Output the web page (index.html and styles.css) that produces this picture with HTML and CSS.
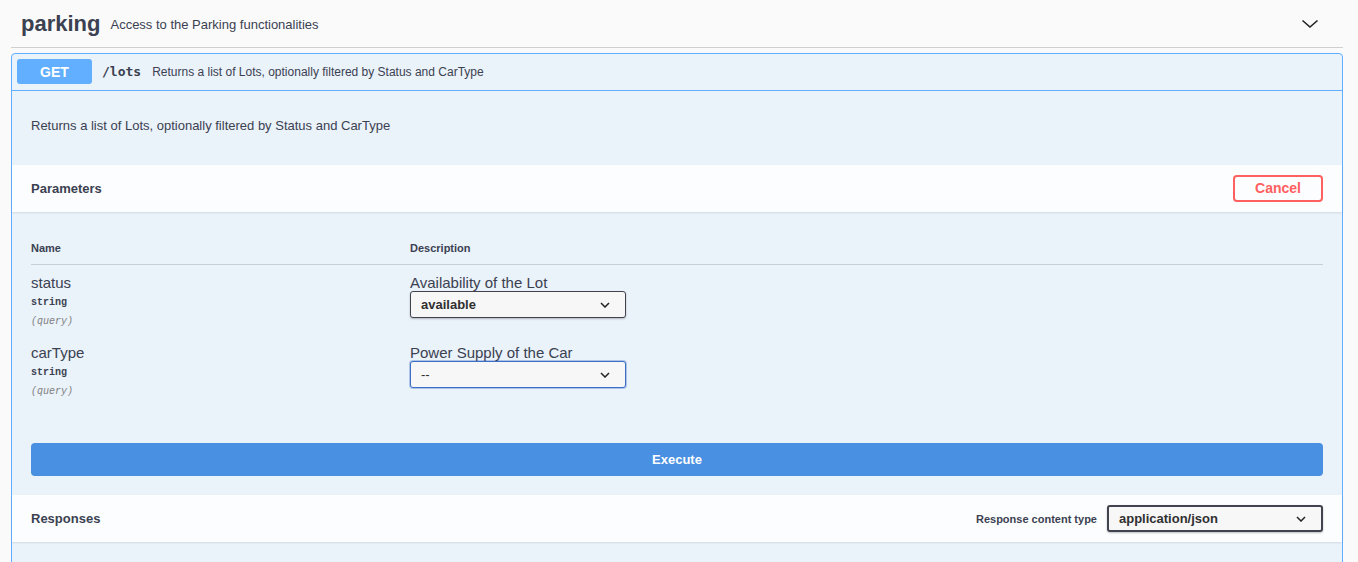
FILE: index.html
```html
<!DOCTYPE html>
<html lang="en">
<head>
<meta charset="utf-8">
<title>parking</title>
<link rel="stylesheet" href="styles.css">
</head>
<body>
<div class="page">
  <div class="tag-header">
    <h3 class="tag-title"><span class="tag-name">parking</span><small class="tag-desc">Access to the Parking functionalities</small></h3>
    <svg class="tag-chevron" width="20" height="20" viewBox="0 0 20 20"><path d="M2.5 6.5 L10 13 L17.5 6.5" fill="none" stroke="#222" stroke-width="1.6"/></svg>
  </div>
  <div class="opblock">
    <div class="summary">
      <span class="method">GET</span>
      <span class="path">/lots</span>
      <span class="summary-desc">Returns a list of Lots, optionally filtered by Status and CarType</span>
    </div>
    <div class="opbody">
      <div class="description">Returns a list of Lots, optionally filtered by Status and CarType</div>
      <div class="section-header">
        <h4 class="section-title">Parameters</h4>
        <button class="cancel">Cancel</button>
      </div>
      <div class="params">
        <div class="params-head">
          <div class="col-name">Name</div>
          <div class="col-desc">Description</div>
        </div>
        <div class="param-row">
          <div class="param-name">
            <div class="pname">status</div>
            <div class="ptype">string</div>
            <div class="pin">(query)</div>
          </div>
          <div class="param-desc">
            <div class="pdesc">Availability of the Lot</div>
            <div class="select"><span class="select-val">available</span><svg class="select-chev" width="10" height="6" viewBox="0 0 10 6"><path d="M1 1 L5 5 L9 1" fill="none" stroke="#222" stroke-width="1.5"/></svg></div>
          </div>
        </div>
        <div class="param-row">
          <div class="param-name">
            <div class="pname">carType</div>
            <div class="ptype">string</div>
            <div class="pin">(query)</div>
          </div>
          <div class="param-desc">
            <div class="pdesc">Power Supply of the Car</div>
            <div class="select select-focus"><span class="select-val select-plain">--</span><svg class="select-chev" width="10" height="6" viewBox="0 0 10 6"><path d="M1 1 L5 5 L9 1" fill="none" stroke="#222" stroke-width="1.5"/></svg></div>
          </div>
        </div>
      </div>
      <div class="execute-wrap"><button class="execute">Execute</button></div>
      <div class="section-header">
        <h4 class="section-title">Responses</h4>
        <div class="content-type">
          <span class="ct-label">Response content type</span>
          <div class="select select-ct"><span class="select-val">application/json</span><svg class="select-chev" width="10" height="6" viewBox="0 0 10 6"><path d="M1 1 L5 5 L9 1" fill="none" stroke="#222" stroke-width="1.5"/></svg></div>
        </div>
      </div>
      <div class="rest"></div>
    </div>
  </div>
</div>
</body>
</html>
```
FILE: styles.css
```css
html, body {
  margin: 0;
  padding: 0;
  background: #fafafa;
  font-family: "Liberation Sans", Arial, sans-serif;
  color: #3b4151;
  height: 562px;
  overflow: hidden;
}
.page {
  padding: 0 15px 0 11px;
}
.tag-header {
  height: 47px;
  border-bottom: 1px solid #cfcfcf;
  display: flex;
  align-items: center;
  justify-content: space-between;
}
.tag-title {
  margin: 0;
  display: flex;
  align-items: center;
  padding-left: 10px;
}
.tag-name {
  font-size: 22px;
  font-weight: 700;
  color: #3b4151;
  padding-top: 1px;
}
.tag-desc {
  font-size: 13px;
  font-weight: 400;
  margin-left: 10px;
  color: #3b4151;
  padding-top: 1px;
}
.tag-chevron {
  margin-right: 23px;
}
.opblock {
  margin-top: 5px;
  border: 1px solid #61affe;
  border-radius: 4px 4px 0 0;
  background: rgba(97,175,254,.1);
  height: 600px;
}
.summary {
  display: flex;
  align-items: center;
  padding: 5px 5px 6px;
  border-bottom: 1px solid #61affe;
}
.method {
  width: 75px;
  height: 25px;
  background: #61affe;
  color: #fff;
  border-radius: 3px;
  font-weight: 700;
  font-size: 14px;
  display: flex;
  align-items: center;
  justify-content: center;
}
.path {
  font-family: "DejaVu Sans Mono", monospace;
  font-weight: 700;
  font-size: 13px;
  margin-left: 10px;
  color: #3b4151;
}
.summary-desc {
  font-size: 12px;
  margin-left: 11px;
  color: #3b4151;
}
.description {
  font-size: 13px;
  line-height: 14px;
  padding: 28px 19px 32px;
}
.section-header {
  height: 47px;
  display: flex;
  align-items: center;
  justify-content: space-between;
  padding: 0 19px;
  background: rgba(255,255,255,.8);
  box-shadow: 0 1px 2px rgba(0,0,0,.1);
}
.section-title {
  margin: 0;
  font-size: 13px;
  font-weight: 700;
}
.cancel {
  box-sizing: border-box;
  width: 90px;
  height: 27px;
  margin-top: -1px;
  border: 2px solid #ff6060;
  border-radius: 4px;
  background: transparent;
  color: #ff6060;
  font-family: "Liberation Sans", Arial, sans-serif;
  font-weight: 700;
  font-size: 14px;
  padding: 0;
}
.params {
  padding: 0 19px;
}
.params-head {
  display: grid;
  grid-template-columns: 379px 1fr;
  padding: 29px 0 9px;
  border-bottom: 1px solid rgba(59,65,81,.2);
  font-size: 11px;
  line-height: 14px;
  font-weight: 700;
}
.param-row {
  display: grid;
  grid-template-columns: 379px 1fr;
  padding: 9px 0 4px;
}
.pname {
  font-size: 15px;
  line-height: 18px;
}
.ptype {
  font-family: "Liberation Mono", monospace;
  font-size: 10px;
  font-weight: 700;
  line-height: 18px;
  margin-top: 2px;
}
.pin {
  font-family: "Liberation Mono", monospace;
  font-size: 10px;
  font-style: italic;
  color: gray;
  line-height: 18px;
  margin-top: 1px;
}
.pdesc {
  font-size: 15px;
  line-height: 17px;
}
.select {
  box-sizing: border-box;
  width: 216px;
  height: 27px;
  border: 1px solid #41444e;
  border-radius: 3px;
  background: #f7f7f7;
  box-shadow: 0 1px 2px rgba(0,0,0,.25);
  display: flex;
  align-items: center;
  justify-content: space-between;
  padding: 0 15px 0 10px;
}
.select-focus {
  border-color: #3d6fc7;
  box-shadow: 0 0 0 1px rgba(61,111,199,.35);
}
.select-val {
  font-size: 13px;
  font-weight: 700;
  color: #303030;
}
.select-plain {
  font-weight: 400;
}
.execute-wrap {
  padding: 38px 19px 19px;
}
.execute {
  display: block;
  width: 100%;
  height: 33px;
  border: none;
  border-radius: 4px;
  background: #4990e2;
  color: #fff;
  font-family: "Liberation Sans", Arial, sans-serif;
  font-weight: 700;
  font-size: 13px;
  padding: 0;
}
.content-type {
  display: flex;
  align-items: center;
}
.ct-label {
  font-size: 11px;
  font-weight: 700;
  margin-right: 10px;
}
.select-ct {
  border-width: 2px;
}
.select-ct .select-val {
  font-size: 13px;
}
```
